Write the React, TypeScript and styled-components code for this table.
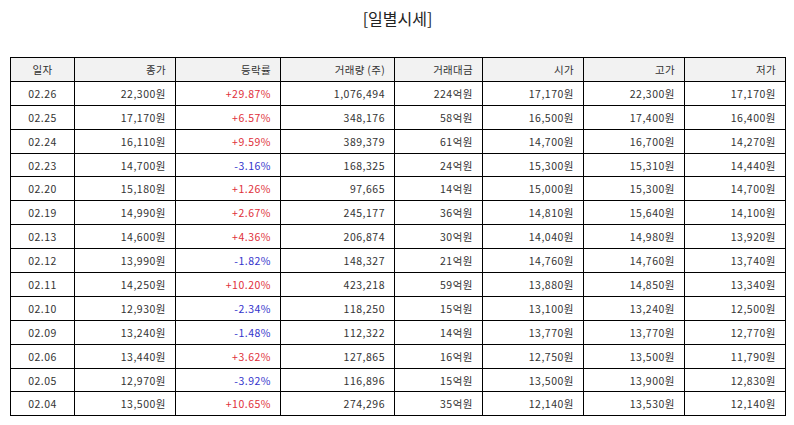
import React from 'react';
import styled, { createGlobalStyle } from 'styled-components';

interface DailyPrice {
  date: string;
  close: string;
  change: string;
  volume: string;
  amount: string;
  open: string;
  high: string;
  low: string;
}

const rows: DailyPrice[] = [
  { date: '02.26', close: '22,300원', change: '+29.87%', volume: '1,076,494', amount: '224억원', open: '17,170원', high: '22,300원', low: '17,170원' },
  { date: '02.25', close: '17,170원', change: '+6.57%', volume: '348,176', amount: '58억원', open: '16,500원', high: '17,400원', low: '16,400원' },
  { date: '02.24', close: '16,110원', change: '+9.59%', volume: '389,379', amount: '61억원', open: '14,700원', high: '16,700원', low: '14,270원' },
  { date: '02.23', close: '14,700원', change: '-3.16%', volume: '168,325', amount: '24억원', open: '15,300원', high: '15,310원', low: '14,440원' },
  { date: '02.20', close: '15,180원', change: '+1.26%', volume: '97,665', amount: '14억원', open: '15,000원', high: '15,300원', low: '14,700원' },
  { date: '02.19', close: '14,990원', change: '+2.67%', volume: '245,177', amount: '36억원', open: '14,810원', high: '15,640원', low: '14,100원' },
  { date: '02.13', close: '14,600원', change: '+4.36%', volume: '206,874', amount: '30억원', open: '14,040원', high: '14,980원', low: '13,920원' },
  { date: '02.12', close: '13,990원', change: '-1.82%', volume: '148,327', amount: '21억원', open: '14,760원', high: '14,760원', low: '13,740원' },
  { date: '02.11', close: '14,250원', change: '+10.20%', volume: '423,218', amount: '59억원', open: '13,880원', high: '14,850원', low: '13,340원' },
  { date: '02.10', close: '12,930원', change: '-2.34%', volume: '118,250', amount: '15억원', open: '13,100원', high: '13,240원', low: '12,500원' },
  { date: '02.09', close: '13,240원', change: '-1.48%', volume: '112,322', amount: '14억원', open: '13,770원', high: '13,770원', low: '12,770원' },
  { date: '02.06', close: '13,440원', change: '+3.62%', volume: '127,865', amount: '16억원', open: '12,750원', high: '13,500원', low: '11,790원' },
  { date: '02.05', close: '12,970원', change: '-3.92%', volume: '116,896', amount: '15억원', open: '13,500원', high: '13,900원', low: '12,830원' },
  { date: '02.04', close: '13,500원', change: '+10.65%', volume: '274,296', amount: '35억원', open: '12,140원', high: '13,530원', low: '12,140원' },
];

const columns = [
  { label: '일자', width: 64 },
  { label: '종가', width: 101 },
  { label: '등락률', width: 105 },
  { label: '거래량 (주)', width: 114 },
  { label: '거래대금', width: 88 },
  { label: '시가', width: 101 },
  { label: '고가', width: 101 },
  { label: '저가', width: 101 },
];

const GlobalStyle = createGlobalStyle`
  html, body {
    margin: 0;
    padding: 0;
    background: #fff;
  }
  body {
    font-family: "Noto Sans CJK KR", "Noto Sans", sans-serif;
    color: #333;
  }
`;

const Page = styled.div`
  width: 794px;
  padding: 6px 9px 0 10px;
  box-sizing: border-box;
`;

const Title = styled.h2`
  margin: 0 0 27px;
  text-align: center;
  font-size: 16px;
  font-weight: 400;
  line-height: 24px;
  color: #222;
`;

const Table = styled.table`
  width: 775px;
  border-collapse: collapse;
  table-layout: fixed;
  font-size: 10.5px;
  color: #333;
`;

const HeadCell = styled.th<{ $center?: boolean }>`
  height: 22.9px;
  padding: 0 9px;
  border: 1.3px solid #000;
  background: #f2f2f2;
  font-weight: 400;
  letter-spacing: 0.3px;
  text-align: ${p => (p.$center ? 'center' : 'right')};
`;

const Cell = styled.td<{ $center?: boolean; $tone?: 'up' | 'down' }>`
  height: 22.9px;
  padding: 0 9px;
  border: 1.3px solid #000;
  text-align: ${p => (p.$center ? 'center' : 'right')};
  color: ${p => (p.$tone === 'up' ? '#e0303a' : p.$tone === 'down' ? '#3333cc' : '#333')};
  letter-spacing: 0.5px;
`;

const App: React.FC = () => {
  return (
    <Page>
      <GlobalStyle />
      <Title>[일별시세]</Title>
      <Table>
        <colgroup>
          {columns.map(col => (
            <col key={col.label} style={{ width: col.width }} />
          ))}
        </colgroup>
        <thead>
          <tr>
            {columns.map((col, i) => (
              <HeadCell key={col.label} $center={i === 0}>
                {col.label}
              </HeadCell>
            ))}
          </tr>
        </thead>
        <tbody>
          {rows.map(row => (
            <tr key={row.date}>
              <Cell $center>{row.date}</Cell>
              <Cell>{row.close}</Cell>
              <Cell $tone={row.change.startsWith('+') ? 'up' : 'down'}>{row.change}</Cell>
              <Cell>{row.volume}</Cell>
              <Cell>{row.amount}</Cell>
              <Cell>{row.open}</Cell>
              <Cell>{row.high}</Cell>
              <Cell>{row.low}</Cell>
            </tr>
          ))}
        </tbody>
      </Table>
    </Page>
  );
};

export default App;
